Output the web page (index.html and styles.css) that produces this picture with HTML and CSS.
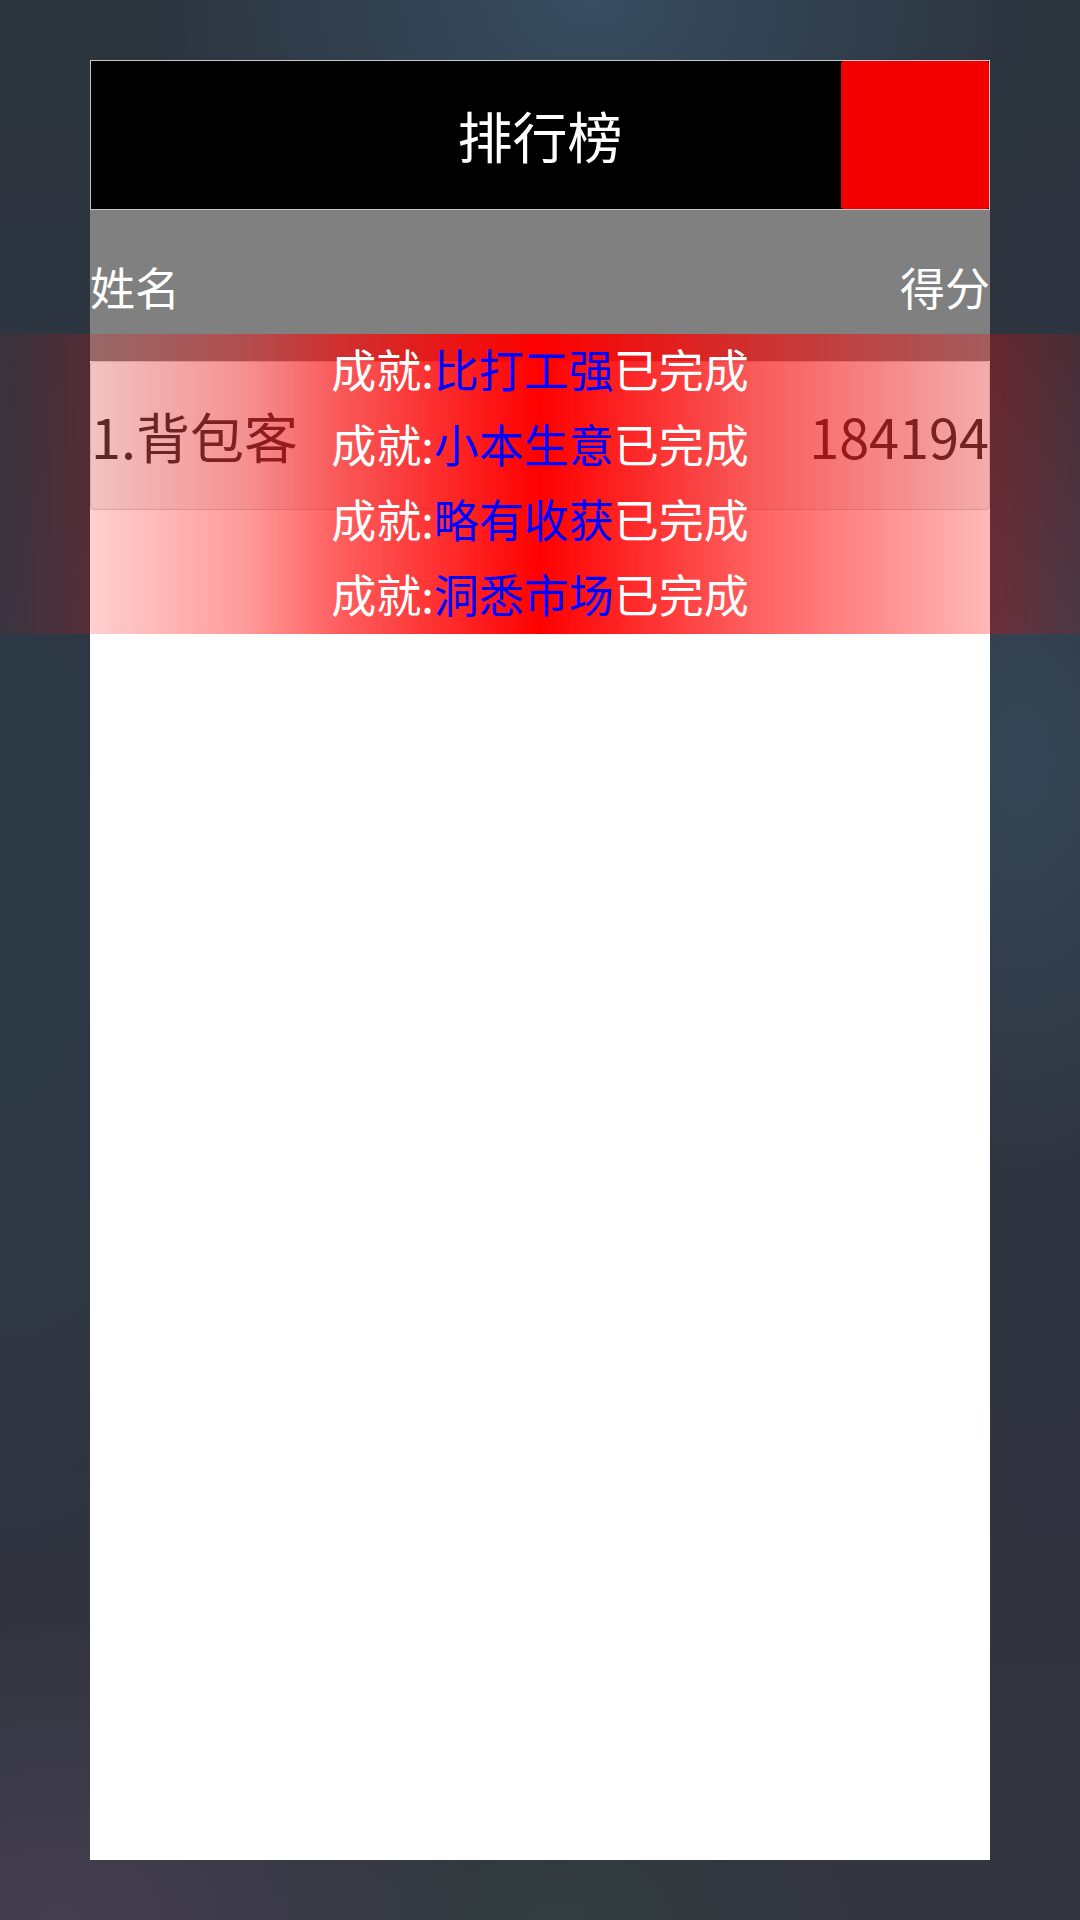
FILE: index.html
```html
<!DOCTYPE html>
<html lang="zh-CN">
<head>
<meta charset="utf-8">
<title>排行榜</title>
<link rel="stylesheet" href="styles.css">
</head>
<body>
<div class="panel">
  <div class="header">
    <div class="spacer"></div>
    <div class="title">排行榜</div>
    <div class="close"></div>
  </div>
  <div class="cols">
    <span>姓名</span>
    <span>得分</span>
  </div>
  <div class="list">
    <div class="row">
      <span class="name">1.背包客</span>
      <span class="score">184194</span>
    </div>
  </div>
</div>
<div class="toast">
  <div class="line">成就:<span class="ach">比打工强</span>已完成</div>
  <div class="line">成就:<span class="ach">小本生意</span>已完成</div>
  <div class="line">成就:<span class="ach">略有收获</span>已完成</div>
  <div class="line">成就:<span class="ach">洞悉市场</span>已完成</div>
</div>
</body>
</html>
```
FILE: styles.css
```css
html, body {
  margin: 0;
  padding: 0;
}
body {
  position: relative;
  width: 1080px;
  height: 1920px;
  overflow: hidden;
  font-family: "Noto Sans CJK SC", "Noto Sans", sans-serif;
  background-color: #2f3440;
  background-image:
    radial-gradient(ellipse 440px 340px at 590px 0px, rgba(56, 78, 98, 0.95), rgba(56, 78, 98, 0) 100%),
    radial-gradient(ellipse 240px 420px at 1020px 760px, rgba(54, 72, 88, 0.95), rgba(54, 72, 88, 0) 100%),
    radial-gradient(ellipse 260px 700px at 20px 900px, rgba(44, 60, 72, 0.8), rgba(44, 60, 72, 0) 100%),
    radial-gradient(ellipse 420px 300px at 60px 1920px, rgba(70, 64, 82, 0.9), rgba(70, 64, 82, 0) 100%),
    radial-gradient(ellipse 300px 200px at 560px 1920px, rgba(48, 62, 62, 0.9), rgba(48, 62, 62, 0) 100%),
    linear-gradient(180deg, #2c343e 0%, #2e3440 50%, #33343f 100%);
}
.panel {
  width: 900px;
  height: 1800px;
  margin: 60px 0 0 90px;
  background: #ffffff;
  display: flex;
  flex-direction: column;
}
.header {
  height: 150px;
  box-sizing: border-box;
  border: 1px solid #c6c6c6;
  background: #000000;
  display: grid;
  grid-template-columns: 148px 1fr 148px;
  align-items: stretch;
}
.title {
  display: flex;
  align-items: center;
  justify-content: center;
  color: #ffffff;
  font-size: 55px;
  line-height: 1;
  padding-bottom: 2px;
}
.close {
  background: #f20000;
  border-radius: 3px;
}
.cols {
  height: 151px;
  background: #808080;
  color: #ffffff;
  font-size: 45px;
  display: flex;
  justify-content: space-between;
  align-items: center;
  padding-top: 1px;
  box-sizing: border-box;
}
.list {
  display: flex;
  flex-direction: column;
}
.row {
  height: 149px;
  box-sizing: border-box;
  border: 1px solid #cfcfcf;
  border-radius: 4px;
  background: #efefef;
  display: flex;
  justify-content: space-between;
  align-items: center;
  font-size: 54px;
  color: #333333;
  padding: 0 0 0 0;
}
.toast {
  position: absolute;
  left: 0;
  right: 0;
  top: 334px;
  height: 300px;
  background: linear-gradient(90deg,
    rgba(255, 0, 0, 0.06) 0%,
    rgba(255, 0, 0, 0.18) 8%,
    rgba(255, 0, 0, 0.4) 23%,
    rgba(255, 0, 0, 0.62) 31%,
    rgba(255, 0, 0, 1) 50%,
    rgba(255, 0, 0, 0.62) 70%,
    rgba(255, 0, 0, 0.4) 84%,
    rgba(255, 0, 0, 0.27) 92%,
    rgba(255, 0, 0, 0.12) 100%);
  display: flex;
  flex-direction: column;
  align-items: center;
}
.line {
  height: 75px;
  box-sizing: border-box;
  line-height: 69px;
  padding-bottom: 6px;
  font-size: 45px;
  color: #ffffff;
  white-space: nowrap;
}
.ach {
  color: #0000ff;
}
```
